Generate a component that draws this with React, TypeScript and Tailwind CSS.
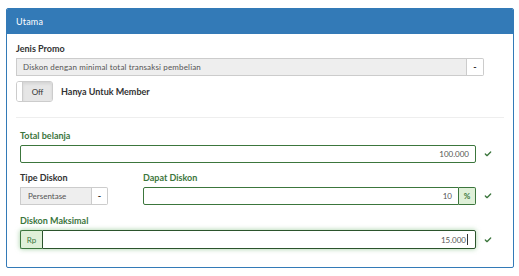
import { Check } from 'lucide-react';

const font = { fontFamily: 'Lato, "Noto Sans", sans-serif' };

export default function App() {
  return (
    <div className="bg-white w-[519px] h-[276px] pt-[8px] pl-[6px]" style={font}>
      <div className="w-[508px] h-[260px] border border-[#337ab7] rounded-[2px] overflow-hidden">
        {/* Heading */}
        <div className="h-[25px] bg-[#337ab7] px-[9px] flex items-center text-white text-[9px] tracking-[0.2px]">
          Utama
        </div>

        {/* Body */}
        <div className="px-[9px] pt-[9px]">
          <div className="text-[9px] leading-[12px] font-bold text-[#333]">Jenis Promo</div>
          <div className="mt-[3px] flex h-[18px] w-[468px]">
            <div className="flex-1 bg-[#eee] border border-[#ccc] flex items-center pl-[6px] text-[8px] text-[#555] tracking-[0.15px]">
              Diskon dengan minimal total transaksi pembelian
            </div>
            <div className="w-[17px] border border-l-0 border-[#ccc] rounded-r-[2px] bg-white flex items-center justify-center text-[9px] text-[#333] font-bold">
              -
            </div>
          </div>

          <div className="mt-[5px] flex items-center">
            <div className="w-[37px] h-[21px] flex border border-[#ccc] rounded-[3px] overflow-hidden">
              <div className="w-[6px] bg-white border-r border-[#ccc]" />
              <div className="flex-1 bg-[#e6e6e6] flex items-center justify-center text-[8px] text-[#333] shadow-[inset_0_2px_3px_rgba(0,0,0,0.08)]">
                Off
              </div>
            </div>
            <div className="ml-[8px] text-[9px] font-bold text-[#333]">Hanya Untuk Member</div>
          </div>

          <div className="mt-[15px] h-px bg-[#eee] w-[488px]" />

          {/* Validated section */}
          <div className="pl-[4px] pt-[12px]">
            <div className="text-[9px] leading-[12px] font-bold text-[#3c763d]">Total belanja</div>
            <div className="mt-[3px] flex items-center">
              <div className="w-[456px] h-[18px] border border-[#3c763d] rounded-[2px] flex items-center justify-end pr-[6px] text-[8px] text-[#555]">
                100.000
              </div>
              <OkMark />
            </div>

            <div className="mt-[9px] flex">
              <div className="w-[123px]">
                <div className="text-[9px] leading-[12px] font-bold text-[#333]">Tipe Diskon</div>
                <div className="mt-[3px] flex h-[18px] w-[88px]">
                  <div className="flex-1 bg-[#eee] border border-[#ccc] flex items-center pl-[7px] text-[8px] text-[#555]">
                    Persentase
                  </div>
                  <div className="w-[16px] border border-l-0 border-[#ccc] rounded-r-[2px] bg-white flex items-center justify-center text-[9px] text-[#333] font-bold">
                    -
                  </div>
                </div>
              </div>
              <div>
                <div className="text-[9px] leading-[12px] font-bold text-[#3c763d]">Dapat Diskon</div>
                <div className="mt-[3px] flex items-center">
                  <div className="w-[333px] h-[18px] flex">
                    <div className="flex-1 border border-[#3c763d] rounded-l-[2px] flex items-center justify-end pr-[6px] text-[8px] text-[#555]">
                      10
                    </div>
                    <div className="w-[17px] border border-l-0 border-[#3c763d] bg-[#dff0d8] rounded-r-[2px] flex items-center justify-center text-[8px] text-[#3c763d] font-bold">
                      %
                    </div>
                  </div>
                  <OkMark />
                </div>
              </div>
            </div>

            <div className="mt-[10px] text-[9px] leading-[12px] font-bold text-[#3c763d]">Diskon Maksimal</div>
            <div className="mt-[3px] flex items-center">
              <div className="w-[456px] h-[19px] flex shadow-[0_0_5px_rgba(103,177,104,0.6)] rounded-[2px]">
                <div className="w-[22px] border border-r-0 border-[#3c763d] bg-[#dff0d8] rounded-l-[2px] flex items-center justify-center text-[8px] text-[#3c763d]">
                  Rp
                </div>
                <div className="flex-1 border border-[#2b542c] rounded-r-[2px] flex items-center justify-end pr-[7px] text-[8px] text-[#555]">
                  15.000<span className="ml-px w-px h-[11px] bg-[#333]" />
                </div>
              </div>
              <OkMark />
            </div>
          </div>
        </div>
      </div>
    </div>
  );
}

function OkMark() {
  return <Check size={8} strokeWidth={4} className="ml-[8px] text-[#3c763d]" />;
}
